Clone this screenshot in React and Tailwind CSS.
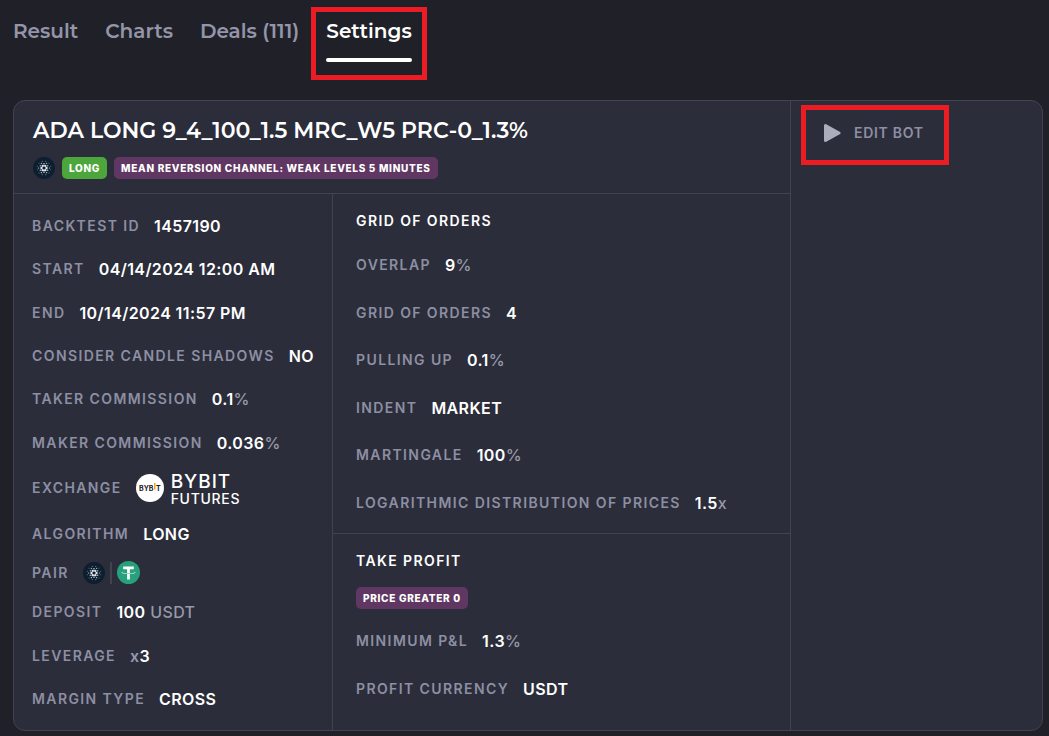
import React, { useState } from "react";

const tabs = ["Result", "Charts", "Deals (111)", "Settings"];

const gridOfOrders = [
  { label: "Overlap", value: "9", suffix: "%" },
  { label: "Grid of orders", value: "4" },
  { label: "Pulling up", value: "0.1", suffix: "%" },
  { label: "Indent", value: "MARKET" },
  { label: "Martingale", value: "100", suffix: "%" },
  { label: "Logarithmic distribution of prices", value: "1.5", suffix: "x" },
];

const takeProfit = [
  { label: "Minimum P&L", value: "1.3", suffix: "%" },
  { label: "Profit currency", value: "USDT" },
];

const Row = ({ label, prefix, value, suffix, children, className = "" }) => (
  <div className={`flex items-center gap-3.5 ${className}`}>
    <dt className="text-sm leading-6 font-semibold tracking-widest uppercase text-[#8d8fa3]">
      {label}
    </dt>
    <dd className="flex items-center text-base leading-6 font-semibold tracking-wide text-white">
      {prefix && <span className="text-[#9799ab]">{prefix}</span>}
      {value}
      {suffix && <span className="font-medium text-[#9799ab]">{suffix}</span>}
      {children}
    </dd>
  </div>
);

const Badge = ({ color, children }) => (
  <span
    className={`flex h-[22px] items-center rounded-[5px] px-[7px] text-[10px] font-extrabold tracking-[0.07em] uppercase text-white ${color}`}
  >
    {children}
  </span>
);

const ring = (count, radius, size, shift = 0) =>
  Array.from({ length: count }, (_, i) => {
    const angle = (i / count) * Math.PI * 2 + shift;
    return (
      <circle
        key={`${radius}-${i}`}
        cx={16 + Math.cos(angle) * radius}
        cy={16 + Math.sin(angle) * radius}
        r={size}
      />
    );
  });

const AdaIcon = () => (
  <svg viewBox="0 0 32 32" className="size-[22px] shrink-0" role="img" aria-label="ADA">
    <circle cx="16" cy="16" r="16" fill="#0d1e30" />
    <g fill="#dfe9ee">
      {ring(6, 3.6, 1.7)}
      {ring(6, 6.2, 1, Math.PI / 6)}
      {ring(6, 7.8, 0.8)}
      {ring(12, 10.2, 0.6, Math.PI / 12)}
    </g>
  </svg>
);

const UsdtIcon = () => (
  <svg viewBox="0 0 32 32" className="size-[23px] shrink-0" role="img" aria-label="USDT">
    <circle cx="16" cy="16" r="16" fill="#26a17b" />
    <path
      fill="#fff"
      d="M17.922 17.383v-.002c-.11.008-.677.042-1.942.042-1.01 0-1.721-.03-1.971-.042v.003c-3.888-.171-6.79-.848-6.79-1.658 0-.809 2.902-1.486 6.79-1.66v2.644c.254.018.982.061 1.988.061 1.207 0 1.812-.05 1.925-.06v-2.643c3.88.173 6.775.85 6.775 1.658 0 .81-2.895 1.485-6.775 1.657m0-3.59v-2.366h5.414V7.819H8.595v3.608h5.414v2.365c-4.4.202-7.709 1.074-7.709 2.118 0 1.044 3.309 1.915 7.709 2.118v7.582h3.913v-7.584c4.393-.202 7.694-1.073 7.694-2.116 0-1.043-3.301-1.914-7.694-2.117"
    />
  </svg>
);

const BybitLogo = () => (
  <svg viewBox="0 0 28 28" className="size-7 shrink-0" role="img" aria-label="Bybit">
    <circle cx="14" cy="14" r="14" fill="#fff" />
    <g fontSize="7" fontWeight="700" letterSpacing="0" fill="#17181e" fontFamily="Inter, sans-serif">
      <text x="3" y="17">
        BYB
      </text>
      <text x="20" y="17">
        T
      </text>
    </g>
    <rect x="18" y="9" width="1.5" height="6.5" fill="#f7a600" />
  </svg>
);

const App = () => {
  const [activeTab, setActiveTab] = useState("Settings");

  return (
    <div className="min-h-screen bg-[#202128] pr-1.5 pb-[5px] pl-[13px] font-['Inter',sans-serif]">
      <nav className="flex gap-[27px] pt-[17px] pb-[38px] font-['Montserrat','Inter',sans-serif]">
        {tabs.map((tab) => (
          <button
            key={tab}
            onClick={() => setActiveTab(tab)}
            className={`relative flex h-[45px] flex-col justify-between text-xl leading-7 font-semibold ${
              activeTab === tab ? "text-white" : "text-[#9495a8]"
            }`}
          >
            {tab}
            {activeTab === tab && <span className="h-1 w-full rounded-full bg-white" />}
            {tab === "Settings" && (
              <span className="pointer-events-none absolute -inset-x-[15px] -top-2.5 -bottom-[18px] border-[5px] border-[#ec1c24]" />
            )}
          </button>
        ))}
      </nav>

      <main className="grid grid-cols-[minmax(0,1fr)_252px] rounded-xl border border-[#41434f] bg-[#2b2d3a]">
        <div>
          <header className="border-b border-[#41434f] px-[19px] pt-[14px] pb-[14px]">
            <h1 className="font-['Montserrat','Inter',sans-serif] text-[22px] leading-8 font-semibold text-white">
              ADA LONG 9_4_100_1.5 MRC_W5 PRC-0_1.3%
            </h1>
            <div className="mt-2.5 flex items-center gap-[7px]">
              <AdaIcon />
              <Badge color="bg-[#4ca63c]">Long</Badge>
              <Badge color="bg-[#5f3762]">Mean reversion channel: weak levels 5 minutes</Badge>
            </div>
          </header>

          <div className="grid grid-cols-[319px_minmax(0,1fr)]">
            <dl className="flex flex-col justify-between border-r border-[#41434f] px-[18px] pt-5 pb-[19px]">
              <Row label="Backtest ID" value="1457190" />
              <Row label="Start" value="04/14/2024 12:00 AM" />
              <Row label="End" value="10/14/2024 11:57 PM" />
              <Row label="Consider candle shadows" value="NO" />
              <Row label="Taker commission" value="0.1" suffix="%" />
              <Row label="Maker commission" value="0.036" suffix="%" />
              <Row label="Exchange" className="-my-[5px]">
                <BybitLogo />
                <span className="ml-[7px] flex flex-col pt-1 font-medium">
                  <span className="text-[19px] leading-[18px] tracking-wider">BYBIT</span>
                  <span className="text-sm leading-4 tracking-wider">FUTURES</span>
                </span>
              </Row>
              <Row label="Algorithm" value="LONG" />
              <Row label="Pair" className="-my-1">
                <span className="flex items-center gap-[5px]">
                  <AdaIcon />
                  <span className="h-[22px] w-0.5 bg-[#41434f]" />
                  <UsdtIcon />
                </span>
              </Row>
              <Row label="Deposit" value="100" suffix={"\u00a0USDT"} />
              <Row label="Leverage" prefix="x" value="3" />
              <Row label="Margin type" value="CROSS" />
            </dl>

            <div>
              <section className="flex min-h-[340px] flex-col border-b border-[#41434f] px-[23px] pt-[15px] pb-[18px]">
                <h2 className="text-sm leading-6 font-semibold tracking-widest uppercase text-white">
                  Grid of orders
                </h2>
                <dl className="mt-5 flex flex-1 flex-col justify-between">
                  {gridOfOrders.map((item) => (
                    <Row key={item.label} {...item} />
                  ))}
                </dl>
              </section>

              <section className="px-[23px] pt-[15px] pb-[29px]">
                <h2 className="text-sm leading-6 font-semibold tracking-widest uppercase text-white">
                  Take profit
                </h2>
                <div className="mt-3.5 mb-5 flex">
                  <Badge color="bg-[#5f3762]">Price greater 0</Badge>
                </div>
                <dl className="flex flex-col gap-6">
                  {takeProfit.map((item) => (
                    <Row key={item.label} {...item} />
                  ))}
                </dl>
              </section>
            </div>
          </div>
        </div>

        <aside className="border-l border-[#41434f] pt-1 pl-2.5">
          <button className="flex h-[60px] items-center gap-[13px] border-[5px] border-[#ec1c24] pr-5 pb-1 pl-[17px] text-sm font-semibold tracking-wider text-[#8d8fa3]">
            <svg viewBox="0 0 18 20" className="h-5 w-[18px]" aria-hidden="true">
              <path
                d="M2.5 2.5v15L16 10Z"
                fill="#abadbd"
                stroke="#abadbd"
                strokeWidth="3"
                strokeLinejoin="round"
              />
            </svg>
            EDIT BOT
          </button>
        </aside>
      </main>
    </div>
  );
};

export default App;
